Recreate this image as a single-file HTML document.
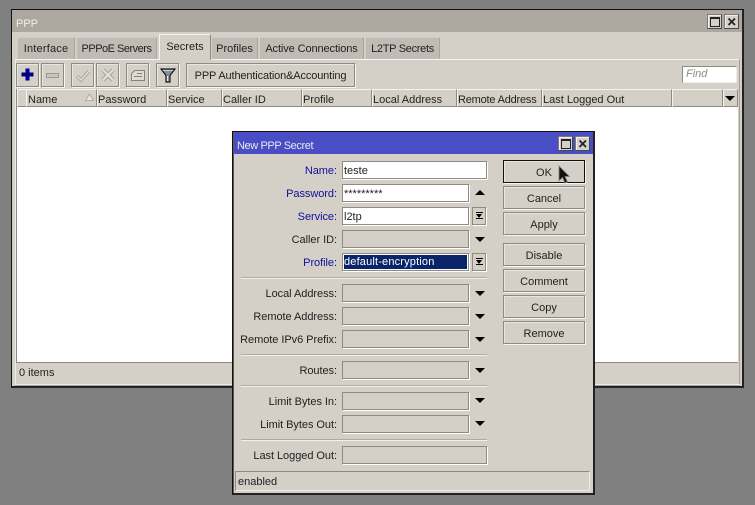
<!DOCTYPE html>
<html><head><meta charset="utf-8">
<style>
html,body{margin:0;padding:0;width:755px;height:505px;overflow:hidden;background:#808080}
body{position:relative;font-family:"Liberation Sans",sans-serif;font-size:11px;color:#1f1f1f}
div,span,svg{position:absolute;box-sizing:border-box}
.t{white-space:nowrap;line-height:14px}
.tab{background:#c0bcb5;border-top:1px solid #cfccc5;border-right:1px solid #aaa69f;height:22px;top:37px;text-align:center;line-height:23px;white-space:nowrap}
.btn{background:#d4d0c8;border:1px solid #8d8a82;box-shadow:inset 1px 1px 0 #e8e6e0,1px 1px 0 #f6f5f1;top:63px;height:24px;width:23px}
.hd{top:89px;height:18px;background:#d4d0c8;border-left:1px solid #f4f3ef;border-right:1px solid #8d8a82;border-bottom:1px solid #8d8a82;border-top:1px solid #f4f3ef;line-height:20px;white-space:nowrap}
.lb{left:236px;width:101px;text-align:right;white-space:nowrap;line-height:20px;height:18px;letter-spacing:-.05px}
.blue{color:#10109a}
.f{left:342px;width:127px;height:18px;background:#d4d0c8;border:1px solid #8d8a82;box-shadow:1px 1px 0 #fff;line-height:18px;padding-left:1px;white-space:nowrap}
.w{background:#fff}
.wide{width:145px}
.sep{left:241px;width:246px;height:2px;background:#aeaaa2;border-bottom:1px solid #f2f0ea}
.ar{left:475px;width:0;height:0;border-left:5px solid transparent;border-right:5px solid transparent;border-top:5px solid #000}
.ddb{left:472px;width:14px;height:18px;background:#d4d0c8;border:1px solid #8d8a82;box-shadow:1px 1px 0 #fff}
.ddb i{position:absolute;left:3px;top:4px;width:7px;height:1px;background:#000}
.ddb b{position:absolute;left:3px;top:6px;width:0;height:0;border-left:3.5px solid transparent;border-right:3.5px solid transparent;border-top:4px solid #000}
.ddb u{position:absolute;left:3px;top:10px;width:7px;height:1px;background:#000}
.ok{left:503px;width:82px;height:23px;background:#d4d0c8;border:1px solid #8d8a82;box-shadow:inset 1px 1px 0 #e8e6e0,1px 1px 0 #f6f5f1;text-align:center;line-height:24px}
.wb{width:15px;height:15px;background:#d4d0c8;border:1px solid #7d7a73;border-right-color:#4a4844;border-bottom-color:#4a4844;box-shadow:inset 1px 1px 0 #f2f0ea}
</style></head><body>

<!-- main window -->
<div style="left:11px;top:9px;width:733px;height:379px;background:#d4d0c8;border:1px solid #111;border-right:2px solid #222;border-bottom:2px solid #222"></div>
<div style="left:12px;top:10px;width:730px;height:22px;background:#aca8a0"></div>
<div class="t" style="left:16px;top:17px;color:#f0efec">PPP</div>
<div class="wb" style="left:707px;top:14px"><div style="left:2px;top:2px;width:10px;height:10px;border:1px solid #222;border-top-width:2px"></div></div>
<div class="wb" style="left:724px;top:14px"><svg style="left:2px;top:2px" width="10" height="10"><path d="M1.5 1.5L8 8M8 1.5L1.5 8" stroke="#222" stroke-width="1.8"/></svg></div>

<!-- tabs -->
<div class="tab" style="left:18px;width:57px;letter-spacing:.2px">Interface</div>
<div class="tab" style="left:77px;width:80px;letter-spacing:-.5px">PPPoE Servers</div>
<div class="tab" style="left:212px;width:46px">Profiles</div>
<div class="tab" style="left:260px;width:104px;letter-spacing:-.1px">Active Connections</div>
<div class="tab" style="left:366px;width:74px;letter-spacing:-.3px">L2TP Secrets</div>
<div style="left:15px;top:59px;width:724px;height:1px;background:#f6f5f1"></div>
<div style="left:15px;top:59px;width:1px;height:326px;background:#f0eee9"></div>
<div style="left:739px;top:59px;width:1px;height:326px;background:#a5a199"></div>
<div style="left:15px;top:384px;width:725px;height:2px;background:#a5a199;border-top:1px solid #f0eee9"></div>
<div style="left:159px;top:34px;width:52px;height:26px;background:#d4d0c8;border:1px solid #f4f3ef;border-right-color:#8d8a82;border-bottom:none;text-align:center;line-height:25px">Secrets</div>

<!-- toolbar -->
<div class="btn" style="left:16px"><svg style="left:3px;top:3px" width="15" height="15"><path d="M7.5 1.5V13.5M1.5 7.5H13.5" stroke="#00008c" stroke-width="4"/></svg></div>
<div class="btn" style="left:41px"><div style="left:4px;top:9px;width:13px;height:5px;background:#c9c5bd;border:1px solid #9c9890"></div></div>
<div class="btn" style="left:71px"><svg style="left:3px;top:3px" width="16" height="16"><path d="M2 9L6 13L14 4" fill="none" stroke="#a8a49d" stroke-width="3.4"/><path d="M2 9L6 13L14 4" fill="none" stroke="#e4e1da" stroke-width="1.4"/></svg></div>
<div class="btn" style="left:96px"><svg style="left:3px;top:3px" width="16" height="16"><path d="M3 3L13 13M13 3L3 13" fill="none" stroke="#a8a49d" stroke-width="4.4"/><path d="M3 3L13 13M13 3L3 13" fill="none" stroke="#e4e1da" stroke-width="2.2"/></svg></div>
<div class="btn" style="left:126px"><svg style="left:3px;top:3px" width="16" height="16"><path d="M1.5 13.5V6.5L5 3.5H14.5V13.5Z" fill="#dedbd4" stroke="#85827a"/><path d="M7 6.5H12M4 9.5H12" stroke="#85827a"/></svg></div>
<div class="btn" style="left:156px"><svg style="left:3px;top:3px" width="16" height="17"><path d="M1 2H15L10 8.5V15H6V8.5Z" fill="#7f929c" stroke="#1a1a1a" stroke-width="1.2"/><path d="M7.5 9V14" stroke="#e8e8e8" stroke-width="1.2"/><path d="M3 3.5H13" stroke="#c5d0d6"/></svg></div>
<div class="btn t" style="left:186px;width:169px;text-align:center;line-height:24px;letter-spacing:-.14px">PPP Authentication&amp;Accounting</div>
<div class="t" style="left:682px;top:66px;width:55px;height:17px;background:#fff;border:1px solid #8d8a82;border-right-color:#f0eee9;border-bottom-color:#f0eee9;line-height:15px;padding-left:3px;color:#8a8a8a;font-style:italic">Find</div>

<!-- table -->
<div class="hd" style="left:17px;width:10px"></div>
<div class="hd" style="left:26px;width:71px;padding-left:1px">Name</div>
<svg style="left:85px;top:93px" width="10" height="9"><path d="M4.5 1L8.5 7.5H0.5Z" fill="#e8e6e0" stroke="#a8a49d" stroke-width=".8"/></svg>
<div class="hd" style="left:97px;width:70px">Password</div>
<div class="hd" style="left:167px;width:55px">Service</div>
<div class="hd" style="left:222px;width:80px">Caller ID</div>
<div class="hd" style="left:302px;width:70px">Profile</div>
<div class="hd" style="left:372px;width:85px">Local Address</div>
<div class="hd" style="left:457px;width:85px;letter-spacing:-.2px">Remote Address</div>
<div class="hd" style="left:542px;width:130px">Last Logged Out</div>
<div class="hd" style="left:672px;width:51px"></div>
<div class="hd" style="left:723px;width:15px"></div>
<div class="ar" style="left:725px;top:96px"></div>
<div style="left:16px;top:107px;width:722px;height:256px;background:#fff;border-left:1px solid #8d8a82;border-bottom:1px solid #8d8a82"></div>
<div style="left:16px;top:89px;width:1px;height:18px;background:#8d8a82"></div>
<div class="t" style="left:19px;top:366px">0 items</div>

<!-- dialog -->
<div style="left:232px;top:131px;width:363px;height:364px;background:#d4d0c8;border:1px solid #111;border-right:2px solid #222;border-bottom:2px solid #222;box-shadow:inset 1px 0 0 #5a5854"></div>
<div style="left:234px;top:132px;width:359px;height:22px;background:#4a4ec4"></div>
<div class="t" style="left:237px;top:139px;color:#e8e8f0;letter-spacing:-.4px">New PPP Secret</div>
<div class="wb" style="left:558px;top:136px"><div style="left:2px;top:2px;width:10px;height:10px;border:1px solid #222;border-top-width:2px"></div></div>
<div class="wb" style="left:575px;top:136px"><svg style="left:2px;top:2px" width="10" height="10"><path d="M1.5 1.5L8 8M8 1.5L1.5 8" stroke="#222" stroke-width="1.8"/></svg></div>

<div class="lb blue" style="top:161px">Name:</div>
<div class="f w wide" style="top:161px">teste</div>
<div class="lb blue" style="top:184px">Password:</div>
<div class="f w" style="top:184px">*********</div>
<div style="left:475px;top:190px;width:0;height:0;border-left:5px solid transparent;border-right:5px solid transparent;border-bottom:5px solid #000"></div>
<div class="lb blue" style="top:207px">Service:</div>
<div class="f w" style="top:207px">l2tp</div>
<div class="ddb" style="top:207px"><i></i><b></b><u></u></div>
<div class="lb" style="top:230px">Caller ID:</div>
<div class="f" style="top:230px"></div>
<div class="ar" style="top:237px"></div>
<div class="lb blue" style="top:253px">Profile:</div>
<div class="f w" style="top:253px;padding:1px"><div style="left:1px;top:1px;width:123px;height:14px;background:#0a246a;color:#fff;line-height:15px;letter-spacing:.17px">default-encryption</div></div>
<div class="ddb" style="top:253px"><i></i><b></b><u></u></div>
<div class="sep" style="top:277px"></div>

<div class="lb" style="top:284px">Local Address:</div>
<div class="f" style="top:284px"></div><div class="ar" style="top:291px"></div>
<div class="lb" style="top:307px">Remote Address:</div>
<div class="f" style="top:307px"></div><div class="ar" style="top:314px"></div>
<div class="lb" style="top:330px">Remote IPv6 Prefix:</div>
<div class="f" style="top:330px"></div><div class="ar" style="top:337px"></div>
<div class="sep" style="top:354px"></div>

<div class="lb" style="top:361px">Routes:</div>
<div class="f" style="top:361px"></div><div class="ar" style="top:368px"></div>
<div class="sep" style="top:385px"></div>

<div class="lb" style="top:392px">Limit Bytes In:</div>
<div class="f" style="top:392px"></div><div class="ar" style="top:398px"></div>
<div class="lb" style="top:415px">Limit Bytes Out:</div>
<div class="f" style="top:415px"></div><div class="ar" style="top:421px"></div>
<div class="sep" style="top:439px"></div>

<div class="lb" style="top:446px">Last Logged Out:</div>
<div class="f wide" style="top:446px"></div>

<div style="left:235px;top:471px;width:355px;height:20px;border:1px solid #8d8a82;border-right-color:#eeece6;border-bottom-color:#eeece6;line-height:20px;padding-left:2px;white-space:nowrap">enabled</div>

<div class="ok" style="top:160px;border-color:#111">OK</div>
<div class="ok" style="top:186px">Cancel</div>
<div class="ok" style="top:212px">Apply</div>
<div class="ok" style="top:243px">Disable</div>
<div class="ok" style="top:269px">Comment</div>
<div class="ok" style="top:295px">Copy</div>
<div class="ok" style="top:321px">Remove</div>

<!-- cursor -->
<svg style="left:558px;top:165px" width="14" height="22"><path d="M1 1V16L4.5 12.5L7 18L9.5 17L7 11.5H11.5Z" fill="#111" stroke="#8a877f" stroke-width=".8"/></svg>

</body></html>
